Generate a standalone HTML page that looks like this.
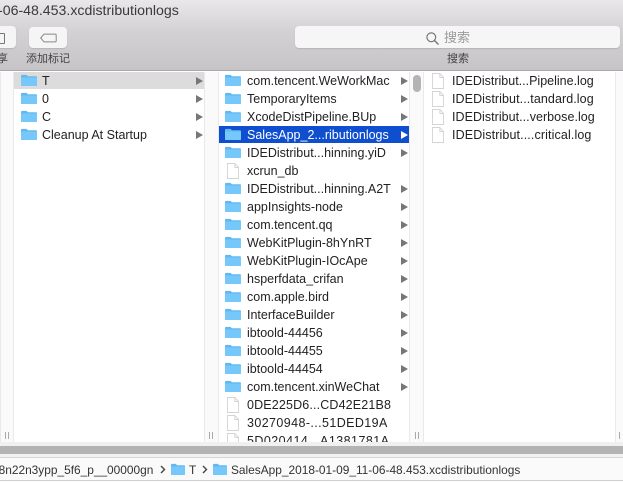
<!DOCTYPE html>
<html>
<head>
<meta charset="utf-8">
<style>
html,body{margin:0;padding:0;background:#fff}
body{width:623px;height:483px;overflow:hidden;position:relative;font-family:"Liberation Sans","Noto Sans CJK SC",sans-serif;color:#222}
#w{position:absolute;left:0;top:0;width:623px;height:483px;overflow:hidden;filter:blur(.3px)}
.a{position:absolute}
.t{position:absolute;white-space:nowrap;font-size:12.5px;line-height:18px;height:18px}
.row{position:absolute;height:18px}
.hl{position:absolute;left:0;top:0;width:100%;height:17px}
.lbl{position:absolute;white-space:nowrap;font-size:12.5px;line-height:18px;top:0}
.arr{position:absolute;top:5px;width:0;height:0;border-left:7px solid #777;border-top:4px solid transparent;border-bottom:4px solid transparent}
.sb{position:absolute;top:72px;height:370px;background:#fafafa;border-left:1px solid #e9e9e9;border-right:1px solid #e9e9e9;box-sizing:border-box}
.grip{position:absolute;top:432px;width:4px;height:7px;border-left:1px solid #aaa;border-right:1px solid #aaa;box-sizing:border-box}
svg{position:absolute;display:block}
.fo{left:7px;top:2px}
.c2 .fo{left:6px}
.do{left:8px;top:1px}
</style>
</head>
<body>
<div id="w">
<!-- toolbar -->
<div class="a" style="left:0;top:0;width:623px;height:71px;background:linear-gradient(#e9e7e9,#d3d1d3 45%,#c6c4c6);border-bottom:1px solid #a9a9a9;box-sizing:border-box"></div>
<div class="t" style="left:-2px;top:1px;font-size:14.15px;color:#3a3a3a;line-height:18px">-06-48.453.xcdistributionlogs</div>

<div class="a" style="left:-10px;top:26px;width:26px;height:22px;background:#f5f5f5;border-radius:4px;box-shadow:0 1px 1px #b5b5b5"></div>
<div class="a" style="left:-2px;top:33px;width:5px;height:9px;border:1px solid #777;border-radius:1px"></div>
<div class="a" style="left:29px;top:27px;width:38px;height:21px;background:#f5f5f5;border-radius:4px;box-shadow:0 1px 1px #b5b5b5"></div>
<svg style="left:40px;top:33px" width="17" height="10"><path d="M.7 5 4 1.1H15a1.2 1.2 0 0 1 1.2 1.2v5.4A1.2 1.2 0 0 1 15 8.9H4Z" fill="none" stroke="#888" stroke-width="1"/></svg>
<div class="t" style="left:-3px;top:50px;font-size:11px;color:#444">享</div>
<div class="t" style="left:26px;top:50px;font-size:11px;color:#444">添加标记</div>

<div class="a" style="left:295px;top:26px;width:325px;height:22px;background:#f6f6f6;border-radius:4px;box-shadow:0 1px 1px #b5b5b5"></div>
<svg style="left:426px;top:32px" width="13" height="13"><circle cx="5.3" cy="5.3" r="4.4" fill="none" stroke="#777" stroke-width="1.2"/><path d="M8.5 8.5 12.5 12.5" stroke="#777" stroke-width="1.4"/></svg>
<div class="t" style="left:444px;top:29px;font-size:13px;color:#9a9a9a">搜索</div>
<div class="t" style="left:447px;top:50px;font-size:11px;color:#444">搜索</div>

<!-- columns -->
<div class="sb" style="left:0;width:14px"></div>
<div class="sb" style="left:204px;width:15px"></div>
<div class="sb" style="left:409px;width:15px"></div>
<div class="sb" style="left:615px;width:8px;border-right:0"></div>
<div class="grip" style="left:5px"></div>
<div class="grip" style="left:209px"></div>
<div class="grip" style="left:415px"></div>
<div class="a" style="left:619px;top:432px;width:1px;height:7px;background:#aaa"></div>
<div class="a" style="left:413px;top:75px;width:8px;height:17px;background:#b4b4b4;border-radius:4px"></div>

<svg width="0" height="0" style="position:absolute">
<defs>
<symbol id="f" viewBox="0 0 16 13" preserveAspectRatio="none"><path d="M0 2a1 1 0 0 1 1-1h4.5l1.5 1.5H15a1 1 0 0 1 1 1V12a1 1 0 0 1-1 1H1a1 1 0 0 1-1-1Z" fill="#62b8f2"/><path d="M0 3.8H16V12a1 1 0 0 1-1 1H1a1 1 0 0 1-1-1Z" fill="#76c7fa"/></symbol>
<symbol id="d" viewBox="0 0 13 16" preserveAspectRatio="none"><path d="M.5.5H8.5L12.5 4.5V15.5H.5Z" fill="#fff" stroke="#d4d4d4"/><path d="M8.5.5V4.5H12.5" fill="none" stroke="#d4d4d4"/></symbol>
</defs>
</svg>

<!-- column 1 -->
<div class="row" style="left:14px;top:72px;width:190px"><div class="hl" style="background:#dcdcdc"></div><svg class="fo" width="16" height="12"><use href="#f"/></svg><span class="lbl" style="left:28px">T</span><i class="arr" style="left:182px"></i></div>
<div class="row" style="left:14px;top:90px;width:190px"><svg class="fo" width="16" height="12"><use href="#f"/></svg><span class="lbl" style="left:28px">0</span><i class="arr" style="left:182px"></i></div>
<div class="row" style="left:14px;top:108px;width:190px"><svg class="fo" width="16" height="12"><use href="#f"/></svg><span class="lbl" style="left:28px">C</span><i class="arr" style="left:182px"></i></div>
<div class="row" style="left:14px;top:126px;width:190px"><svg class="fo" width="16" height="12"><use href="#f"/></svg><span class="lbl" style="left:28px">Cleanup At Startup</span><i class="arr" style="left:182px"></i></div>

<!-- column 2 -->
<div class="a c2" style="left:219px;top:72px;width:190px;height:370px;overflow:hidden">
<div class="row" style="left:0;top:0;width:190px"><svg class="fo" width="16" height="12"><use href="#f"/></svg><span class="lbl" style="left:28px">com.tencent.WeWorkMac</span><i class="arr" style="left:182px"></i></div>
<div class="row" style="left:0;top:18px;width:190px"><svg class="fo" width="16" height="12"><use href="#f"/></svg><span class="lbl" style="left:28px">TemporaryItems</span><i class="arr" style="left:182px"></i></div>
<div class="row" style="left:0;top:36px;width:190px"><svg class="fo" width="16" height="12"><use href="#f"/></svg><span class="lbl" style="left:28px">XcodeDistPipeline.BUp</span><i class="arr" style="left:182px"></i></div>
<div class="row" style="left:0;top:54px;width:190px"><div class="hl" style="background:#0f4fcf"></div><svg class="fo" width="16" height="12"><use href="#f"/></svg><span class="lbl" style="left:28px;color:#fff">SalesApp_2...ributionlogs</span><i class="arr" style="left:182px;border-left-color:#fff"></i></div>
<div class="row" style="left:0;top:72px;width:190px"><svg class="fo" width="16" height="12"><use href="#f"/></svg><span class="lbl" style="left:28px">IDEDistribut...hinning.yiD</span><i class="arr" style="left:182px"></i></div>
<div class="row" style="left:0;top:90px;width:190px"><svg class="do" width="12" height="16"><use href="#d"/></svg><span class="lbl" style="left:28px">xcrun_db</span></div>
<div class="row" style="left:0;top:108px;width:190px"><svg class="fo" width="16" height="12"><use href="#f"/></svg><span class="lbl" style="left:28px">IDEDistribut...hinning.A2T</span><i class="arr" style="left:182px"></i></div>
<div class="row" style="left:0;top:126px;width:190px"><svg class="fo" width="16" height="12"><use href="#f"/></svg><span class="lbl" style="left:28px">appInsights-node</span><i class="arr" style="left:182px"></i></div>
<div class="row" style="left:0;top:144px;width:190px"><svg class="fo" width="16" height="12"><use href="#f"/></svg><span class="lbl" style="left:28px">com.tencent.qq</span><i class="arr" style="left:182px"></i></div>
<div class="row" style="left:0;top:162px;width:190px"><svg class="fo" width="16" height="12"><use href="#f"/></svg><span class="lbl" style="left:28px">WebKitPlugin-8hYnRT</span><i class="arr" style="left:182px"></i></div>
<div class="row" style="left:0;top:180px;width:190px"><svg class="fo" width="16" height="12"><use href="#f"/></svg><span class="lbl" style="left:28px">WebKitPlugin-IOcApe</span><i class="arr" style="left:182px"></i></div>
<div class="row" style="left:0;top:198px;width:190px"><svg class="fo" width="16" height="12"><use href="#f"/></svg><span class="lbl" style="left:28px">hsperfdata_crifan</span><i class="arr" style="left:182px"></i></div>
<div class="row" style="left:0;top:216px;width:190px"><svg class="fo" width="16" height="12"><use href="#f"/></svg><span class="lbl" style="left:28px">com.apple.bird</span><i class="arr" style="left:182px"></i></div>
<div class="row" style="left:0;top:234px;width:190px"><svg class="fo" width="16" height="12"><use href="#f"/></svg><span class="lbl" style="left:28px">InterfaceBuilder</span><i class="arr" style="left:182px"></i></div>
<div class="row" style="left:0;top:252px;width:190px"><svg class="fo" width="16" height="12"><use href="#f"/></svg><span class="lbl" style="left:28px">ibtoold-44456</span><i class="arr" style="left:182px"></i></div>
<div class="row" style="left:0;top:270px;width:190px"><svg class="fo" width="16" height="12"><use href="#f"/></svg><span class="lbl" style="left:28px">ibtoold-44455</span><i class="arr" style="left:182px"></i></div>
<div class="row" style="left:0;top:288px;width:190px"><svg class="fo" width="16" height="12"><use href="#f"/></svg><span class="lbl" style="left:28px">ibtoold-44454</span><i class="arr" style="left:182px"></i></div>
<div class="row" style="left:0;top:306px;width:190px"><svg class="fo" width="16" height="12"><use href="#f"/></svg><span class="lbl" style="left:28px">com.tencent.xinWeChat</span><i class="arr" style="left:182px"></i></div>
<div class="row" style="left:0;top:324px;width:190px"><svg class="do" width="12" height="16"><use href="#d"/></svg><span class="lbl" style="left:28px;letter-spacing:.15px">0DE225D6...CD42E21B8</span></div>
<div class="row" style="left:0;top:342px;width:190px"><svg class="do" width="12" height="16"><use href="#d"/></svg><span class="lbl" style="left:28px;letter-spacing:.4px">30270948-...51DED19A</span></div>
<div class="row" style="left:0;top:360px;width:190px"><svg class="do" width="12" height="16"><use href="#d"/></svg><span class="lbl" style="left:28px;letter-spacing:.45px">5D020414...A1381781A</span></div>
</div>

<!-- column 3 -->
<div class="row" style="left:424px;top:72px;width:190px"><svg class="do" width="12" height="16"><use href="#d"/></svg><span class="lbl" style="left:28px">IDEDistribut...Pipeline.log</span></div>
<div class="row" style="left:424px;top:90px;width:190px"><svg class="do" width="12" height="16"><use href="#d"/></svg><span class="lbl" style="left:28px;letter-spacing:.08px">IDEDistribut...tandard.log</span></div>
<div class="row" style="left:424px;top:108px;width:190px"><svg class="do" width="12" height="16"><use href="#d"/></svg><span class="lbl" style="left:28px;letter-spacing:.04px">IDEDistribut...verbose.log</span></div>
<div class="row" style="left:424px;top:126px;width:190px"><svg class="do" width="12" height="16"><use href="#d"/></svg><span class="lbl" style="left:28px;letter-spacing:.12px">IDEDistribut....critical.log</span></div>

<!-- bottom -->
<div class="a" style="left:0;top:442px;width:623px;height:4px;background:#f0f0f0"></div>
<div class="a" style="left:0;top:446px;width:623px;height:8px;background:#b3b3b3"></div>
<div class="a" style="left:0;top:454px;width:623px;height:3px;background:#f2f2f2"></div>
<div class="a" style="left:0;top:457px;width:623px;height:24px;background:#fafafa;border-top:1px solid #d4d4d4;border-bottom:1px solid #cfcfcf;box-sizing:border-box"></div>
<div class="t" style="left:-8px;top:461px;font-size:11.9px;color:#333">48n22n3ypp_5f6_p__00000gn</div>
<svg style="left:160px;top:465px" width="6" height="9"><path d="M1 1 4.5 4.5 1 8" fill="none" stroke="#444" stroke-width="1.4"/></svg>
<svg style="left:171px;top:463px" width="14" height="12"><use href="#f"/></svg>
<div class="t" style="left:189px;top:461px;font-size:11.9px;color:#333">T</div>
<svg style="left:202px;top:465px" width="6" height="9"><path d="M1 1 4.5 4.5 1 8" fill="none" stroke="#444" stroke-width="1.4"/></svg>
<svg style="left:213px;top:463px" width="14" height="12"><use href="#f"/></svg>
<div class="t" style="left:231px;top:461px;font-size:11.9px;color:#333">SalesApp_2018-01-09_11-06-48.453.xcdistributionlogs</div>
</div>
</body>
</html>
